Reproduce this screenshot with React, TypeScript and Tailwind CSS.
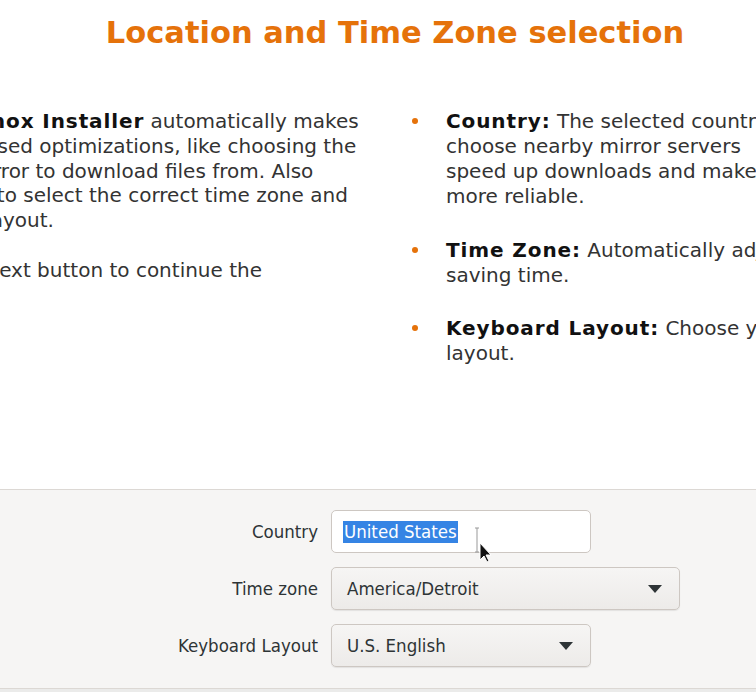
const leftLines: { bold?: string; pre?: string; text: string }[] = [
	{ pre: "The ", bold: "Proxmox Installer", text: " automatically makes" },
	{ text: "location-based optimizations, like choosing the" },
	{ text: "nearest mirror to download files from. Also" },
	{ text: "make sure to select the correct time zone and" },
	{ text: "keyboard layout." },
];

const bullets = [
	{
		label: "Country:",
		lines: [
			" The selected country is used to",
			"choose nearby mirror servers",
			"speed up downloads and make updates",
			"more reliable.",
		],
	},
	{
		label: "Time Zone:",
		lines: [" Automatically adjust daylight", "saving time."],
	},
	{
		label: "Keyboard Layout:",
		lines: [" Choose your keyboard", "layout."],
	},
];

function Combo({ value, className }: { value: string; className: string }) {
	return (
		<div
			className={`flex h-[43px] items-center justify-between rounded-[5px] border border-[#cdc7c2] bg-gradient-to-b from-[#f6f5f4] to-[#edebe9] pl-[15px] pr-[15px] text-[#2e3436] shadow-[0_1px_1px_rgba(0,0,0,0.08)] ${className}`}
		>
			<span>{value}</span>
			<svg width="14" height="8" viewBox="0 0 14 8" className="mr-[2px]">
				<path d="M0 0 H14 L7 8 Z" fill="#2e3436" />
			</svg>
		</div>
	);
}

export default function App() {
	return (
		<div className="relative h-[692px] w-[756px] overflow-hidden bg-white font-['DejaVu_Sans',sans-serif]">
			<h1 className="pt-[13px] pl-[34px] text-center text-[30.5px] font-bold leading-[40px] text-[#e5720a]">
				Location and Time Zone selection
			</h1>

			<div className="mt-[56px] flex h-[380px] text-[20px] leading-[24.8px] text-[#333]">
				{/* left column, clipped on the left edge */}
				<div className="ml-[-114px] w-[526px] shrink-0 whitespace-nowrap">
					{leftLines.map((l, i) => (
						<div key={i}>
							{l.pre}
							{l.bold && <b className="tracking-[0.9px] text-[#111]">{l.bold}</b>}
							{l.text}
						</div>
					))}
					<div className="mt-[24.8px]">Press the Next button to continue the</div>
				</div>

				{/* right column */}
				<ul className="flex flex-col gap-[28.5px] whitespace-nowrap leading-[25px]">
					{bullets.map((b) => (
						<li key={b.label} className="flex">
							<span className="mt-[9px] mr-[28px] size-[6px] shrink-0 rounded-full bg-[#e5720a]" />
							<div>
								{b.lines.map((ln, i) => (
									<div key={i}>
										{i === 0 && <b className="tracking-[0.9px] text-[#111]">{b.label}</b>}
										{ln}
									</div>
								))}
							</div>
						</li>
					))}
				</ul>
			</div>

			{/* bottom form panel */}
			<div className="flex h-[200px] flex-col gap-[14px] border-y border-[#dcd8d4] bg-[#f6f5f4] pt-[20px] font-stretch-condensed font-['DejaVu_Sans_Condensed','DejaVu_Sans',sans-serif] text-[18.5px] text-[#2e3436]">
				<div className="flex items-center">
					<span className="w-[318px] text-right">Country</span>
					<div className="ml-[13px] flex h-[43px] w-[260px] items-center rounded-[5px] border border-[#cdc7c2] bg-white pl-[11px]">
						<span className="bg-[#3584e4] px-[1px] leading-[22px] text-white">United States</span>
					</div>
				</div>
				<div className="flex items-center">
					<span className="w-[318px] text-right">Time zone</span>
					<Combo value="America/Detroit" className="ml-[13px] w-[349px]" />
				</div>
				<div className="flex items-center">
					<span className="w-[318px] text-right">Keyboard Layout</span>
					<Combo value="U.S. English" className="ml-[13px] w-[260px]" />
				</div>
			</div>
			<div className="h-[4px] bg-[#ebebea]" />

			{/* mouse cursor over the entry */}
			<svg
				className="absolute left-[473px] top-[526px]"
				width="20"
				height="36"
				viewBox="0 0 20 36"
			>
				<path d="M2 2 h4 M4 2 v24 M2 26 h4" stroke="#999" strokeWidth="1" fill="none" />
				<path d="M7 17 L7 34 L11 30 L14 36 L16 35 L13 29 L18 29 Z" fill="#111" stroke="#fff" strokeWidth="1" />
			</svg>
		</div>
	);
}
